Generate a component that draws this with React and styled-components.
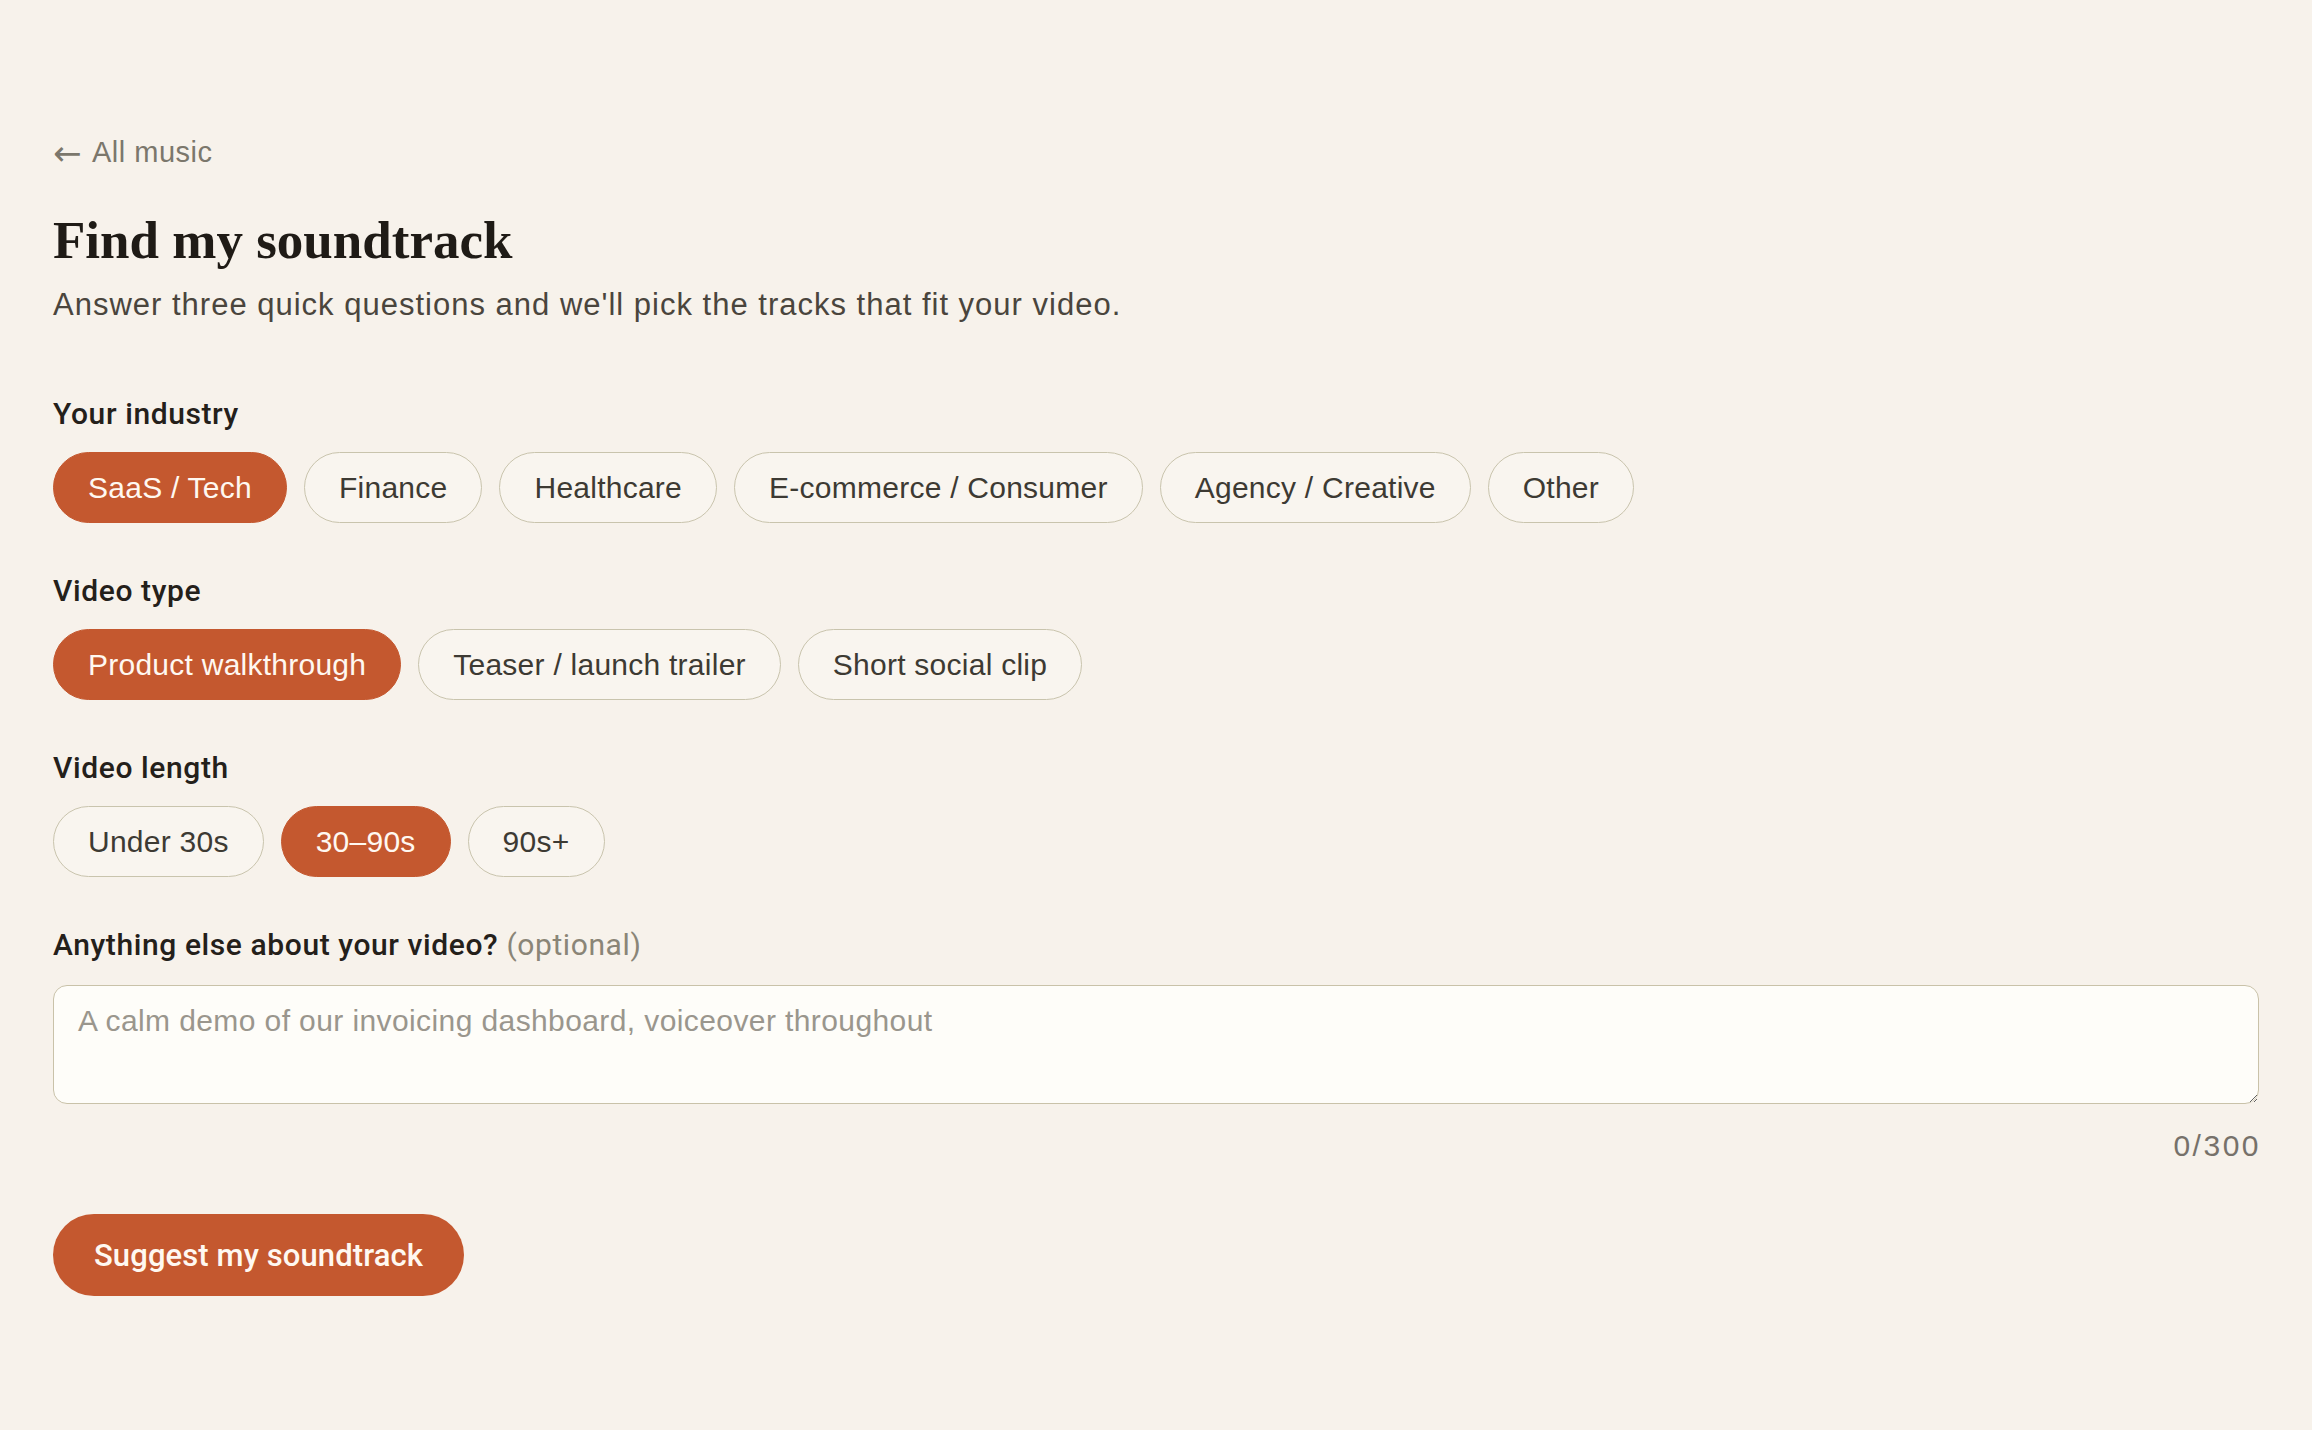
import { useState } from 'react';
import styled, { createGlobalStyle } from 'styled-components';

const GlobalStyle = createGlobalStyle`
  html, body {
    margin: 0;
    padding: 0;
    background: #f7f2eb;
  }
  * {
    box-sizing: border-box;
  }
`;

const Page = styled.main`
  padding: 134px 53px 120px;
  font-family: "Liberation Sans", Arial, sans-serif;
  color: #24201a;
`;

const BackLink = styled.a`
  display: inline-flex;
  align-items: center;
  gap: 10px;
  font-size: 29px;
  line-height: 36px;
  letter-spacing: 0.5px;
  color: #7b776c;
  text-decoration: none;
  cursor: pointer;
`;

const Arrow = styled.span`
  font-family: "DejaVu Sans", sans-serif;
  font-size: 34px;
  line-height: 36px;
  position: relative;
  top: 1px;
`;

const Title = styled.h1`
  margin: 38px 0 0;
  font-family: "Liberation Serif", "Times New Roman", serif;
  font-weight: 700;
  font-size: 53px;
  line-height: 64px;
  color: #1f1b16;
`;

const Subtitle = styled.p`
  margin: 12px 0 0;
  font-size: 31px;
  line-height: 42px;
  letter-spacing: 1px;
  color: #4a453d;
`;

const Form = styled.form`
  margin-top: 70px;
  display: flex;
  flex-direction: column;
  gap: 50px;
`;

const Section = styled.div`
  display: flex;
  flex-direction: column;
  gap: ${({ $gap }) => $gap || 20}px;
`;

const Label = styled.div`
  font-family: Roboto, "Liberation Sans", sans-serif;
  font-weight: 500;
  font-size: 30px;
  line-height: 36px;
  letter-spacing: 0.6px;
  color: #24201a;
`;

const Optional = styled.span`
  color: #8a8577;
  font-weight: 400;
`;

const ChipRow = styled.div`
  display: flex;
  flex-wrap: wrap;
  gap: 17px;
`;

const Chip = styled.button`
  height: 71px;
  padding: 0 34px;
  border-radius: 36px;
  border: 1.5px solid ${({ $active }) => ($active ? '#c4582f' : '#c9c4ad')};
  background: ${({ $active }) => ($active ? '#c4582f' : '#f9f5ef')};
  color: ${({ $active }) => ($active ? '#fff8f1' : '#3d3a33')};
  font-family: "Liberation Sans", Arial, sans-serif;
  font-size: 30px;
  letter-spacing: 0.25px;
  display: inline-flex;
  align-items: center;
  cursor: pointer;
`;

const TextArea = styled.textarea`
  display: block;
  width: 100%;
  height: 119px;
  padding: 14px 24px;
  border: 1.5px solid #c9c2a9;
  border-radius: 14px;
  background: #fefdf9;
  font-family: "Liberation Sans", Arial, sans-serif;
  font-size: 30px;
  line-height: 42px;
  letter-spacing: 0.4px;
  color: #24201a;
  resize: vertical;
  outline: none;

  &::placeholder {
    color: #9a968d;
  }
`;

const Counter = styled.div`
  margin-top: 22px;
  text-align: right;
  font-size: 30px;
  line-height: 40px;
  letter-spacing: 2.5px;
  margin-right: -2px;
  color: #76716a;
`;

const Submit = styled.button`
  margin-top: 48px;
  height: 82px;
  padding: 0 41px;
  border: none;
  border-radius: 41px;
  background: #c4582f;
  color: #fff8f1;
  font-family: Roboto, "Liberation Sans", sans-serif;
  font-weight: 500;
  font-size: 31px;
  letter-spacing: 0.1px;
  cursor: pointer;
`;

const industries = ['SaaS / Tech', 'Finance', 'Healthcare', 'E-commerce / Consumer', 'Agency / Creative', 'Other'];
const videoTypes = ['Product walkthrough', 'Teaser / launch trailer', 'Short social clip'];
const lengths = ['Under 30s', '30–90s', '90s+'];

function ChipGroup({ label, options, value, onChange }) {
  return (
    <Section>
      <Label>{label}</Label>
      <ChipRow>
        {options.map((opt) => (
          <Chip type="button" key={opt} $active={opt === value} onClick={() => onChange(opt)}>
            {opt}
          </Chip>
        ))}
      </ChipRow>
    </Section>
  );
}

export default function App() {
  const [industry, setIndustry] = useState('SaaS / Tech');
  const [videoType, setVideoType] = useState('Product walkthrough');
  const [length, setLength] = useState('30–90s');
  const [notes, setNotes] = useState('');

  return (
    <>
      <GlobalStyle />
      <Page>
        <BackLink>
          <Arrow>←</Arrow>All music
        </BackLink>
        <Title>Find my soundtrack</Title>
        <Subtitle>Answer three quick questions and we'll pick the tracks that fit your video.</Subtitle>

        <Form onSubmit={(e) => e.preventDefault()}>
          <ChipGroup label="Your industry" options={industries} value={industry} onChange={setIndustry} />
          <ChipGroup label="Video type" options={videoTypes} value={videoType} onChange={setVideoType} />
          <ChipGroup label="Video length" options={lengths} value={length} onChange={setLength} />

          <div>
            <Section $gap={22}>
              <Label>
                Anything else about your video? <Optional>(optional)</Optional>
              </Label>
              <TextArea
                maxLength={300}
                value={notes}
                onChange={(e) => setNotes(e.target.value)}
                placeholder="A calm demo of our invoicing dashboard, voiceover throughout"
              />
            </Section>
            <Counter>{notes.length}/300</Counter>
            <Submit type="submit">Suggest my soundtrack</Submit>
          </div>
        </Form>
      </Page>
    </>
  );
}
